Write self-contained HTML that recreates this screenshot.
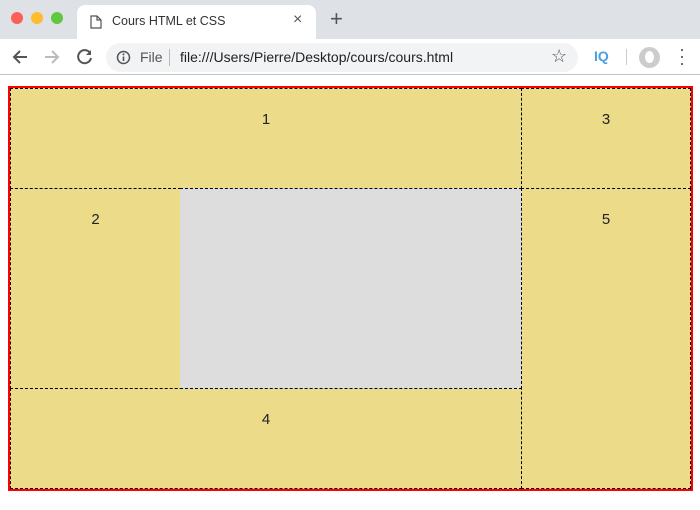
<!DOCTYPE html><html><head><style>
*{margin:0;padding:0;box-sizing:border-box}
body{width:700px;height:510px;background:#fff;font-family:"Liberation Sans",sans-serif;position:relative;overflow:hidden}
.tabbar{position:absolute;left:0;top:0;width:700px;height:39px;background:#dee1e6}
.dot{position:absolute;top:12px;width:12px;height:12px;border-radius:50%}
.tab{position:absolute;left:77px;top:5px;width:239px;height:35px;background:#fff;border-radius:8px 8px 0 0}
.toolbar{position:absolute;left:0;top:39px;width:700px;height:36px;background:#fff;border-bottom:1px solid #c4c4c4}
.omni{position:absolute;left:106px;top:4px;width:472px;height:29px;background:#f1f3f4;border-radius:15px}
.c{position:absolute;background:#ecdc8a;border:1px dashed #000;font-size:15px;color:#222;text-align:center;padding-top:22px}
</style></head><body>
<div class="tabbar">
<div class="dot" style="left:11px;background:#fc5f57"></div>
<div class="dot" style="left:31px;background:#fdbc2e"></div>
<div class="dot" style="left:51px;background:#5fc83f"></div>
<div class="tab">
<svg style="position:absolute;left:13px;top:10px" width="12" height="14"><path d="M1 1h6l4 4v8H1z M7 1v4h4" fill="none" stroke="#555" stroke-width="1.2"/></svg>
<span style="position:absolute;left:35px;top:9px;font-size:12.5px;color:#333">Cours HTML et CSS</span>
<span style="position:absolute;left:216px;top:6px;font-size:16px;color:#555">×</span>
</div>
<span style="position:absolute;left:330px;top:8px;font-size:22px;color:#555;line-height:22px">+</span>
</div>
<div class="toolbar">
<svg style="position:absolute;left:11px;top:10px" width="18" height="16"><path d="M16 8H3M9 2L3 8l6 6" fill="none" stroke="#555" stroke-width="2"/></svg>
<svg style="position:absolute;left:43px;top:10px" width="18" height="16"><path d="M2 8h13M9 2l6 6-6 6" fill="none" stroke="#bbb" stroke-width="2"/></svg>
<svg style="position:absolute;left:76px;top:9px" width="18" height="18"><path d="M14 5A6.5 6.5 0 1 0 15 10" fill="none" stroke="#555" stroke-width="2"/><path d="M15 2v5h-5z" fill="#555"/></svg>
<div class="omni">
<svg style="position:absolute;left:10px;top:7px" width="15" height="15"><circle cx="7.5" cy="7.5" r="6" fill="none" stroke="#555" stroke-width="1.5"/><path d="M7.5 6.5v4.5" stroke="#555" stroke-width="1.6"/><circle cx="7.5" cy="4.4" r="1" fill="#555"/></svg>
<span style="position:absolute;left:34px;top:6px;font-size:14px;color:#555">File</span>
<div style="position:absolute;left:63px;top:6px;width:1px;height:17px;background:#bbb"></div>
<span style="position:absolute;left:74px;top:6px;font-size:14px;color:#222">file:///Users/Pierre/Desktop/cours/cours.html</span>
<span style="position:absolute;left:445px;top:3px;font-size:18px;color:#555">☆</span>
</div>
<span style="position:absolute;left:594px;top:9px;font-size:14px;font-weight:bold;color:#4a9fe0">IQ</span>
<div style="position:absolute;left:626px;top:10px;width:1px;height:16px;background:#ccc"></div>
<div style="position:absolute;left:639px;top:8px;width:21px;height:21px;border-radius:50%;background:#ccc"><div style="position:absolute;left:6px;top:4px;width:9px;height:12px;border-radius:50%;background:#fff"></div></div>
<span style="position:absolute;left:679px;top:7px;font-size:18px;color:#555;line-height:7px;width:4px">·<br>·<br>·</span>
</div>
<div style="position:absolute;left:8px;top:86px;width:685px;height:405px;border:2px solid #f00;background:#ddd"></div>
<div class="c" style="left:10px;top:88px;width:512px;height:101px">1</div>
<div class="c" style="left:521px;top:88px;width:170px;height:101px">3</div>
<div class="c" style="left:10px;top:188px;width:171px;height:201px">2</div>
<div class="c" style="left:10px;top:388px;width:512px;height:101px">4</div>
<div class="c" style="left:521px;top:188px;width:170px;height:301px">5</div>
<div style="position:absolute;left:180px;top:188px;width:342px;height:201px;border:1px dashed #000;border-left:none;background:#ddd"></div>
</body></html>
